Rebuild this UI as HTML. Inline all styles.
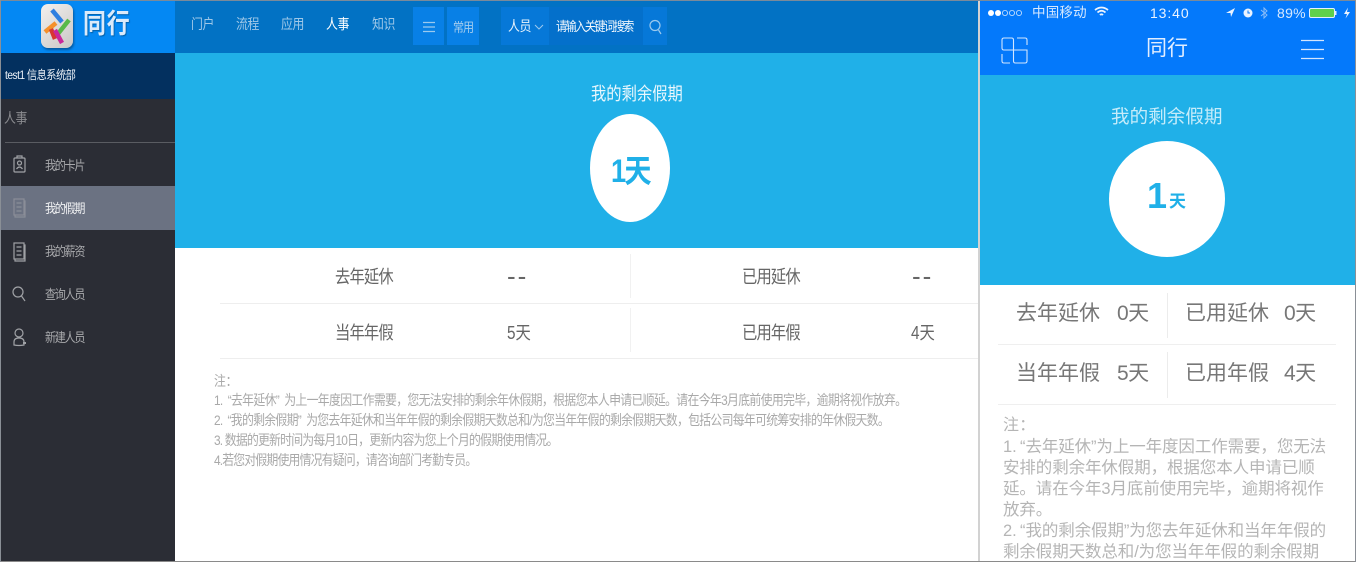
<!DOCTYPE html>
<html lang="zh"><head><meta charset="utf-8"><title>同行</title>
<style>
html,body{margin:0;padding:0;background:#fff}
#p{position:relative;width:1356px;height:562px;overflow:hidden;background:#fff;font-family:"Liberation Sans","Noto Sans CJK SC",sans-serif}
.a,.t{position:absolute}
.t{white-space:nowrap;line-height:1}
.s{transform:scaleX(.85);transform-origin:0 50%}
svg{position:absolute;overflow:visible}
</style></head><body><div id="p">
<!-- left header -->
<div class="a" style="left:0;top:0;width:175px;height:53px;background:#0488f3"></div>
<div class="a" style="left:175px;top:0;width:804px;height:53px;background:#0272c4"></div>
<div class="a" style="left:0;top:53px;width:175px;height:46px;background:#03305f"></div>
<div class="a" style="left:0;top:99px;width:175px;height:463px;background:#2b2d35"></div>
<div class="a" style="left:5px;top:142px;width:170px;height:1px;background:#5a5c62"></div>
<div class="a" style="left:0;top:186px;width:175px;height:44px;background:#6b7282"></div>
<!-- logo -->
<div class="a" style="left:41px;top:4px;width:32px;height:44px;border-radius:7px;background:linear-gradient(135deg,#f3f0ee,#c9c7c5);box-shadow:1px 2px 2px #055aa0"></div>
<svg style="left:0;top:0" width="175" height="53" fill="none" stroke-width="4.500">
<path d="M52 10L62 22" stroke="#2f7fe0"/><path d="M45 32L56 23" stroke="#f5902b"/><path d="M57 35L69 20" stroke="#58b947"/><path d="M51 29L55 39" stroke="#d8372f"/><path d="M55 30L62 43" stroke="#c9279a"/>
</svg>
<div class="t s" style="left:83px;top:11px;font-size:27px;font-weight:bold;color:#dbeafa;letter-spacing:1px;text-shadow:1px 1px 1px #0560a8">同行</div>
<!-- nav -->
<div class="t s" style="left:191px;top:17px;font-size:14px;letter-spacing:-.5px;color:#9fc8e8">门户</div>
<div class="t s" style="left:236px;top:17px;font-size:14px;letter-spacing:-.5px;color:#9fc8e8">流程</div>
<div class="t s" style="left:281px;top:17px;font-size:14px;letter-spacing:-.5px;color:#9fc8e8">应用</div>
<div class="t s" style="left:326px;top:17px;font-size:14px;letter-spacing:-.5px;color:#fff">人事</div>
<div class="t s" style="left:372px;top:17px;font-size:14px;letter-spacing:-.5px;color:#9fc8e8">知识</div>
<div class="a" style="left:413px;top:7px;width:31px;height:38px;background:#0880e6"></div>
<div class="a" style="left:447px;top:7px;width:32px;height:38px;background:#0880e6"></div>
<svg style="left:413px;top:7px" width="31" height="38" stroke="#9cc9ee" stroke-width="1.200"><path d="M10 15.500H22M10 20H22M10 24.500H22"/></svg>
<div class="t s" style="left:453px;top:21px;font-size:13px;letter-spacing:-1.200px;color:#a6cdee">常用</div>
<div class="a" style="left:501px;top:7px;width:166px;height:38px;background:#0678d8"></div>
<div class="a" style="left:549px;top:7px;width:94px;height:38px;background:#0470cb"></div>
<div class="t s" style="left:508px;top:19px;font-size:14px;letter-spacing:-.5px;color:#e8f3fc">人员</div>
<svg style="left:534px;top:24px" width="10" height="6" fill="none" stroke="#9cc9ee"><path d="M1 1L5 5L9 1"/></svg>
<div class="t s" style="left:556px;top:20px;font-size:13px;letter-spacing:-1.700px;color:#f3f8fd">请输入关键词搜索</div>
<svg style="left:649px;top:19px" width="14" height="16" fill="none" stroke="#9cc9ee" stroke-width="1.200"><circle cx="6" cy="6.500" r="5"/><path d="M9.500 11L12 15"/></svg>
<!-- sidebar -->
<div class="t s" style="left:5px;top:69px;font-size:12px;letter-spacing:-.6px;color:#eef3f8">test1 信息系统部</div>
<div class="t s" style="left:4px;top:111px;font-size:14px;letter-spacing:-.5px;color:#8b8c90">人事</div>
<svg style="left:0;top:143px" width="175" height="220" fill="none" stroke="#a0a2a6" stroke-width="1.200">
<rect x="14" y="15" width="11" height="14" rx="1"/><path d="M17 15V13H22V15"/><circle cx="19.500" cy="20" r="2"/><path d="M16.500 26Q19.500 22 22.500 26"/>
<rect x="14" y="56" width="10" height="16" stroke="#8a8e98"/><path d="M24 58H25V74H15V72M16.500 60H21.500M16.500 64H21.500M16.500 68H21.500" stroke="#8a8e98"/>
<rect x="14" y="100" width="10" height="16"/><path d="M24 102H25V118H15V116M16.500 104H21.500M16.500 108H21.500M16.500 112H21.500"/>
<circle cx="18" cy="149" r="5"/><path d="M21.500 153L25 158"/>
<circle cx="19" cy="190" r="4"/><path d="M14 202V199Q14 195 19 195Q24 195 24 199V202Q19 203 14 202Z"/><path d="M23 200H26" stroke-width="2"/>
</svg>
<div class="t s" style="left:45px;top:159px;font-size:13px;letter-spacing:-1.500px;color:#a8a9ac">我的卡片</div>
<div class="t s" style="left:45px;top:202px;font-size:13px;letter-spacing:-1.500px;color:#f0f1f3">我的假期</div>
<div class="t s" style="left:45px;top:245px;font-size:13px;letter-spacing:-1.500px;color:#a8a9ac">我的薪资</div>
<div class="t s" style="left:45px;top:288px;font-size:13px;letter-spacing:-1.500px;color:#a8a9ac">查询人员</div>
<div class="t s" style="left:45px;top:331px;font-size:13px;letter-spacing:-1.500px;color:#a8a9ac">新建人员</div>
<!-- main hero -->
<div class="a" style="left:175px;top:53px;width:803px;height:195px;background:#20b0e8"></div>
<div class="t s" style="left:591px;top:85px;font-size:18px;letter-spacing:0;color:#eaf7fd">我的剩余假期</div>
<div class="a" style="left:590px;top:114px;width:80px;height:108px;border-radius:50%;background:#fff"></div>
<div class="t s" style="left:611px;top:155px;font-size:32px;font-weight:bold;letter-spacing:-2px;color:#20b0e8">1天</div>
<!-- main table -->
<div class="a" style="left:220px;top:303px;width:758px;height:1px;background:#eeeeee"></div>
<div class="a" style="left:220px;top:358px;width:758px;height:1px;background:#eeeeee"></div>
<div class="a" style="left:630px;top:254px;width:1px;height:44px;background:#f1f1f1"></div>
<div class="a" style="left:630px;top:308px;width:1px;height:44px;background:#f1f1f1"></div>
<div class="t s" style="left:335px;top:268px;font-size:18px;letter-spacing:-1px;color:#666">去年延休</div>
<div class="t" style="left:507px;top:263px;font-size:26px;letter-spacing:2px;color:#666">--</div>
<div class="t s" style="left:742px;top:268px;font-size:18px;letter-spacing:-1px;color:#666">已用延休</div>
<div class="t" style="left:912px;top:263px;font-size:26px;letter-spacing:2px;color:#666">--</div>
<div class="t s" style="left:335px;top:324px;font-size:18px;letter-spacing:-1px;color:#666">当年年假</div>
<div class="t s" style="left:507px;top:324px;font-size:18px;color:#666">5天</div>
<div class="t s" style="left:742px;top:324px;font-size:18px;letter-spacing:-1px;color:#666">已用年假</div>
<div class="t s" style="left:911px;top:324px;font-size:18px;color:#666">4天</div>
<!-- main notes -->
<div class="t s" style="left:214px;top:374px;font-size:14px;color:#a9a9a9;letter-spacing:-.3px">注：</div>
<div class="t s" style="left:214px;top:393px;font-size:14px;color:#a9a9a9;letter-spacing:-.82px;word-spacing:3px">1. “去年延休” 为上一年度因工作需要，您无法安排的剩余年休假期，根据您本人申请已顺延。请在今年3月底前使用完毕，逾期将视作放弃。</div>
<div class="t s" style="left:214px;top:413px;font-size:14px;color:#a9a9a9;letter-spacing:-.87px;word-spacing:3px">2. “我的剩余假期” 为您去年延休和当年年假的剩余假期天数总和/为您当年年假的剩余假期天数，包括公司每年可统筹安排的年休假天数。</div>
<div class="t s" style="left:214px;top:433px;font-size:14px;color:#a9a9a9;letter-spacing:-.97px">3. 数据的更新时间为每月10日，更新内容为您上个月的假期使用情况。</div>
<div class="t s" style="left:214px;top:453px;font-size:14px;color:#a9a9a9;letter-spacing:-1px">4.若您对假期使用情况有疑问，请咨询部门考勤专员。</div>
<!-- divider -->
<div class="a" style="left:978px;top:0;width:2px;height:562px;background:#d2d2d2"></div>
<!-- phone -->
<div class="a" style="left:980px;top:0;width:376px;height:75px;background:#0479fb"></div>
<div class="a" style="left:980px;top:75px;width:376px;height:210px;background:#20b0e8"></div>
<svg style="left:987px;top:8px" width="60" height="10"><g fill="#fff"><circle cx="4" cy="5" r="3"/><circle cx="11" cy="5" r="3"/></g><g fill="none" stroke="#cfe4fd" stroke-width=".8"><circle cx="18" cy="5" r="2.600"/><circle cx="25" cy="5" r="2.600"/><circle cx="32" cy="5" r="2.600"/></g></svg>
<div class="t" style="left:1032px;top:6px;font-size:13.500px;letter-spacing:.2px;color:#d6e8fe">中国移动</div>
<svg style="left:1094px;top:6px" width="15" height="11" fill="none" stroke="#eaf3ff" stroke-width="1.800"><path d="M1 4Q7.500-1 14 4M3.500 6.500Q7.500 3 11.500 6.500M6 9Q7.500 7.500 9 9"/></svg>
<div class="t" style="left:1150px;top:6px;font-size:14px;font-weight:normal;letter-spacing:.9px;color:#eaf3ff">13:40</div>
<svg style="left:1225px;top:7px" width="130" height="12"><path d="M1 6L10 1L6 10L5.500 6Z" fill="#eaf3ff"/><circle cx="23" cy="6" r="4.500" fill="#eaf3ff"/><path d="M23 3.500V6H25" stroke="#0479fb" fill="none"/><path d="M36 3L42 8L39 11V1L42 4L36 9" fill="none" stroke="#8cbdf8"/><rect x="84.500" y="1.500" width="25" height="9" rx="1.500" fill="#5fd04c" stroke="#e3efff"/><rect x="110" y="4" width="1.500" height="4" fill="#e3efff"/><path d="M123 0.500L119 7H122L120.500 11.500L125 5H122Z" fill="#eaf3ff"/></svg>
<div class="t" style="left:1277px;top:6px;font-size:14px;letter-spacing:.3px;color:#d6e8fe">89%</div>
<svg style="left:1001px;top:37px" width="27" height="27" fill="none" stroke="#d4e6fe" stroke-width="1.100"><path d="M12.500 13H3Q1 13 1 11V3Q1 1 3 1H10.500Q12.500 1 12.500 3V13ZM16 1H24Q26 1 26 3V8M26 13H12.500V24Q12.500 26 14.500 26H24Q26 26 26 24ZM1 17V24Q1 26 3 26H9"/></svg>
<div class="t" style="left:1146px;top:38px;font-size:21px;color:#e2eeff">同行</div>
<svg style="left:1301px;top:39px" width="24" height="21" stroke="#d4e6fe" stroke-width="1.200"><path d="M0 1.500H23M0 10.500H23M0 19.500H23"/></svg>
<div class="t" style="left:1111px;top:108px;font-size:18.500px;letter-spacing:.1px;color:#c6ecfa">我的剩余假期</div>
<div class="a" style="left:1109px;top:141px;width:116px;height:116px;border-radius:50%;background:#fff"></div>
<div class="t" style="left:1147px;top:178px;font-size:36px;font-weight:bold;color:#20b0e8">1</div>
<div class="t" style="left:1169px;top:193px;font-size:17px;font-weight:bold;color:#20b0e8">天</div>
<div class="a" style="left:998px;top:344px;width:338px;height:1px;background:#efefef"></div>
<div class="a" style="left:998px;top:404px;width:338px;height:1px;background:#efefef"></div>
<div class="a" style="left:1167px;top:293px;width:1px;height:45px;background:#ececec"></div>
<div class="a" style="left:1167px;top:352px;width:1px;height:46px;background:#ececec"></div>
<div class="t" style="left:1016px;top:303px;font-size:21px;color:#777">去年延休</div>
<div class="t" style="left:1117px;top:303px;font-size:21px;letter-spacing:-.5px;color:#777">0天</div>
<div class="t" style="left:1185px;top:303px;font-size:21px;color:#777">已用延休</div>
<div class="t" style="left:1284px;top:303px;font-size:21px;letter-spacing:-.5px;color:#777">0天</div>
<div class="t" style="left:1016px;top:363px;font-size:21px;color:#777">当年年假</div>
<div class="t" style="left:1117px;top:363px;font-size:21px;letter-spacing:-.5px;color:#777">5天</div>
<div class="t" style="left:1185px;top:363px;font-size:21px;color:#777">已用年假</div>
<div class="t" style="left:1284px;top:363px;font-size:21px;letter-spacing:-.5px;color:#777">4天</div>
<div class="t" style="left:1003px;top:418px;font-size:16px;letter-spacing:.2px;color:#b5b5b5">注：</div>
<div class="t" style="left:1003px;top:439px;font-size:16.500px;letter-spacing:-.1px;word-spacing:-1px;color:#b5b5b5">1. “去年延休”为上一年度因工作需要，您无法</div>
<div class="t" style="left:1003px;top:460px;font-size:16.500px;letter-spacing:-.1px;color:#b5b5b5">安排的剩余年休假期，根据您本人申请已顺</div>
<div class="t" style="left:1003px;top:481px;font-size:16.500px;letter-spacing:-.1px;color:#b5b5b5">延。请在今年3月底前使用完毕，逾期将视作</div>
<div class="t" style="left:1003px;top:502px;font-size:16.500px;letter-spacing:-.1px;color:#b5b5b5">放弃。</div>
<div class="t" style="left:1003px;top:523px;font-size:16.500px;letter-spacing:-.1px;word-spacing:-1px;color:#b5b5b5">2. “我的剩余假期”为您去年延休和当年年假的</div>
<div class="t" style="left:1003px;top:544px;font-size:16.500px;letter-spacing:-.1px;color:#b5b5b5">剩余假期天数总和/为您当年年假的剩余假期</div>
<!-- frame -->
<div class="a" style="left:0;top:0;width:1356px;height:1px;background:#7a8a9a"></div>
<div class="a" style="left:0;top:561px;width:1356px;height:1px;background:#8a8a8a"></div>
<div class="a" style="left:0;top:0;width:1px;height:562px;background:#8a8f96"></div>
<div class="a" style="left:1355px;top:0;width:1px;height:562px;background:#8a8f96"></div>
</div></body></html>
